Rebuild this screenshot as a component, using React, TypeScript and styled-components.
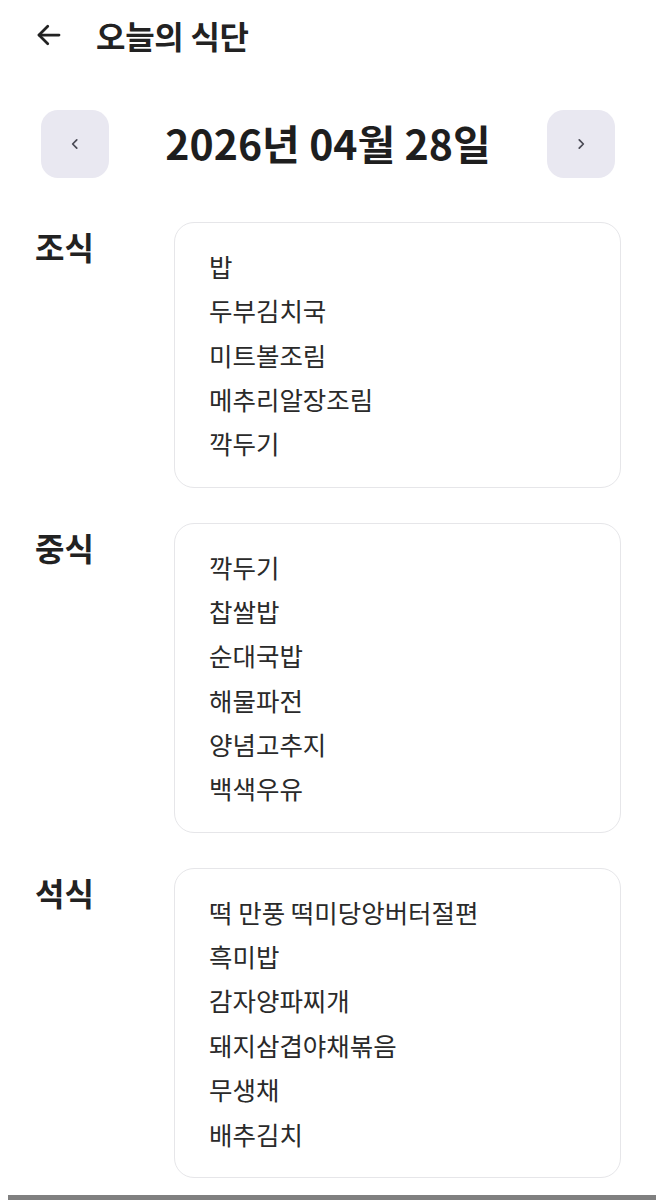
import React from 'react';
import styled, { createGlobalStyle } from 'styled-components';

const GlobalStyle = createGlobalStyle`
  body {
    margin: 0;
    background: #ffffff;
    font-family: "Noto Sans CJK KR", "Noto Sans", sans-serif;
    color: #222222;
  }
`;

const meals = [
  { title: '조식', items: ['밥', '두부김치국', '미트볼조림', '메추리알장조림', '깍두기'] },
  { title: '중식', items: ['깍두기', '찹쌀밥', '순대국밥', '해물파전', '양념고추지', '백색우유'] },
  { title: '석식', items: ['떡 만풍 떡미당앙버터절편', '흑미밥', '감자양파찌개', '돼지삼겹야채볶음', '무생채', '배추김치'] },
];

const App = () => {
  return (
    <Page>
      <GlobalStyle />
      <Header>
        <BackButton aria-label="back">
          <svg width="30" height="30" viewBox="0 0 24 24" fill="none" stroke="#222" strokeWidth="2.2" strokeLinecap="round" strokeLinejoin="round">
            <path d="M20 12H4" />
            <path d="M11 5l-7 7 7 7" />
          </svg>
        </BackButton>
        <Title>오늘의 식단</Title>
      </Header>

      <DateNav>
        <NavButton aria-label="prev">
          <svg width="14" height="14" viewBox="0 0 24 24" fill="none" stroke="#4a4a55" strokeWidth="3" strokeLinecap="round" strokeLinejoin="round">
            <path d="M15 5l-7 7 7 7" />
          </svg>
        </NavButton>
        <DateText>2026년 04월 28일</DateText>
        <NavButton aria-label="next">
          <svg width="14" height="14" viewBox="0 0 24 24" fill="none" stroke="#4a4a55" strokeWidth="3" strokeLinecap="round" strokeLinejoin="round">
            <path d="M9 5l7 7-7 7" />
          </svg>
        </NavButton>
      </DateNav>

      <MealList>
        {meals.map(meal => (
          <MealRow key={meal.title}>
            <MealLabel>{meal.title}</MealLabel>
            <MenuCard>
              {meal.items.map((item, i) => (
                <MenuItem key={i}>{item}</MenuItem>
              ))}
            </MenuCard>
          </MealRow>
        ))}
      </MealList>

      <BottomBar />
    </Page>
  );
};

export default App;

const Page = styled.div`
  width: 656px;
  height: 1200px;
  display: flex;
  flex-direction: column;
  overflow: hidden;
`;

const Header = styled.header`
  display: flex;
  align-items: center;
  height: 70px;
  padding: 0 0 0 32px;
  gap: 30px;
`;

const BackButton = styled.button`
  border: 0;
  background: transparent;
  padding: 0;
  width: 34px;
  height: 34px;
  display: flex;
  align-items: center;
  justify-content: center;
  cursor: pointer;
`;

const Title = styled.h1`
  margin: 0;
  font-size: 32px;
  font-weight: 700;
  letter-spacing: -0.3px;
  color: #222;
`;

const DateNav = styled.div`
  display: flex;
  align-items: center;
  justify-content: space-between;
  padding: 40px 41px 0 41px;
`;

const NavButton = styled.button`
  width: 68px;
  height: 68px;
  border: 0;
  border-radius: 17px;
  background: #e9e8f1;
  display: flex;
  align-items: center;
  justify-content: center;
  cursor: pointer;
`;

const DateText = styled.div`
  font-size: 41px;
  font-weight: 700;
  letter-spacing: 0;
  color: #1e1e1e;
  margin-top: -4px;
`;

const MealList = styled.div`
  display: flex;
  flex-direction: column;
  gap: 35px;
  padding: 44px 35px 0 35px;
`;

const MealRow = styled.section`
  display: grid;
  grid-template-columns: 139px 1fr;
  align-items: start;
`;

const MealLabel = styled.h2`
  margin: 0;
  padding-top: 3px;
  font-size: 32px;
  font-weight: 700;
  line-height: 42px;
  color: #222;
`;

const MenuCard = styled.div`
  border: 1.5px solid #e6e6e9;
  border-radius: 20px;
  padding: 21px 34px;
  display: flex;
  flex-direction: column;
`;

const MenuItem = styled.div`
  font-size: 25.5px;
  line-height: 44.35px;
  color: #2a2a2a;
`;

const BottomBar = styled.div`
  margin: auto 0 0 8px;
  height: 5px;
  background: #808080;
`;
